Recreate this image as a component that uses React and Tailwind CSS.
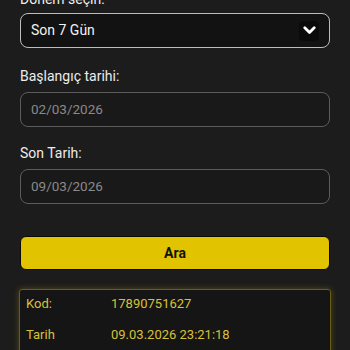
export default function App() {
  return (
    <div className="h-[350px] w-[350px] overflow-hidden bg-[#1c1c1c] px-5 font-['Roboto',sans-serif]">
      <div className="-mt-[11px]">
        <div className="text-[14px] leading-5 text-[#ececec]">Dönem seçin:</div>
        <div className="mt-[4px] flex h-[35px] items-center justify-between rounded-lg border border-[#bdbdbd] bg-[#121212] pl-[10px] pr-[10px]">
          <span className="text-[14px] text-[#f2f2f2]">Son 7 Gün</span>
          <span className="flex h-[20px] w-[20px] items-center justify-center rounded bg-[#0a0a0a]">
            <svg width="13" height="9" viewBox="0 0 13 9">
              <path d="M1.8 1.8 L6.5 6.5 L11.2 1.8" fill="none" stroke="#fff" strokeWidth="2.8" strokeLinecap="round" strokeLinejoin="round" />
            </svg>
          </span>
        </div>

        <div className="mt-[18px] text-[14px] leading-5 text-[#ececec]">Başlangıç tarihi:</div>
        <div className="mt-[6px] flex h-[35px] items-center rounded-lg border border-[#5c5c5c] bg-[#191919] pl-[10px]">
          <span className="text-[13.5px] text-[#8a8a8a]">02/03/2026</span>
        </div>

        <div className="mt-[16px] text-[14px] leading-5 text-[#ececec]">Son Tarih:</div>
        <div className="mt-[6px] flex h-[35px] items-center rounded-lg border border-[#5c5c5c] bg-[#191919] pl-[10px]">
          <span className="text-[13.5px] text-[#8a8a8a]">09/03/2026</span>
        </div>

        <button className="mt-[32px] flex h-[34px] w-full items-center justify-center rounded-md border border-[#0a0a0a] bg-[#e2c300] text-[14px] font-bold text-[#111]">
          Ara
        </button>

        <div className="ml-[-1px] mr-[-1px] mt-[19px] rounded-[3px] border border-[#6a5c12] bg-[#151515] px-[6px] pt-[4px] pb-4 shadow-[0_0_6px_rgba(200,170,20,0.35)]">
          <div className="flex h-[20px] items-center text-[13px] text-[#d8c13a]">
            <span className="w-[85px]">Kod:</span>
            <span>17890751627</span>
          </div>
          <div className="mt-[11px] flex h-[20px] items-center text-[13px] text-[#d8c13a]">
            <span className="w-[85px]">Tarih</span>
            <span>09.03.2026 23:21:18</span>
          </div>
        </div>
      </div>
    </div>
  );
}
